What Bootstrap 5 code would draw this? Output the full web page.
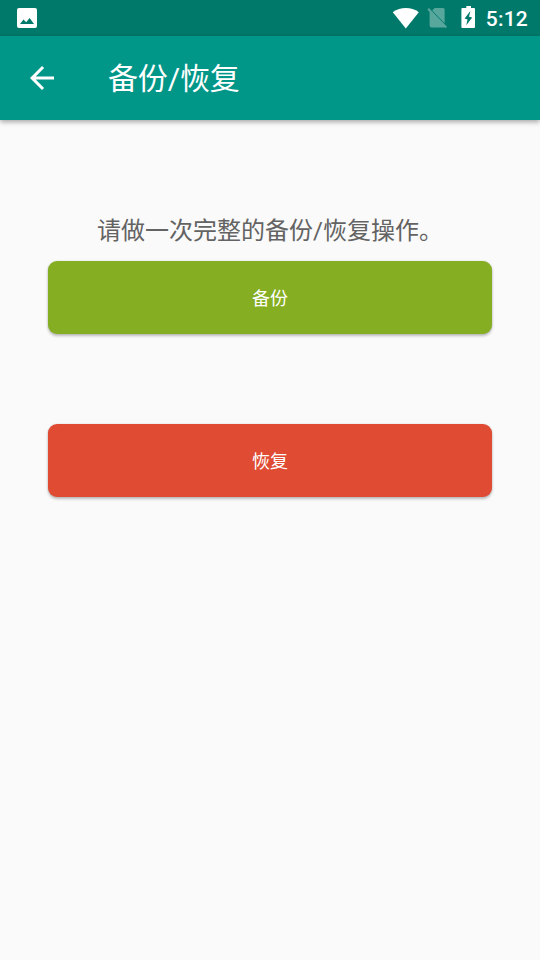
<!DOCTYPE html>
<html lang="zh-CN">
<head>
<meta charset="utf-8">
<meta name="viewport" content="width=device-width, initial-scale=1">
<title>备份/恢复</title>
<link href="https://cdn.jsdelivr.net/npm/bootstrap@5.3.0/dist/css/bootstrap.min.css" rel="stylesheet">
<style>
body { background: #fafafa; font-family: Roboto, "Noto Sans CJK SC", sans-serif; }
.status-bar { height: 36px; background: #00796b; padding: 0 12px 0 17px; }
.status-bar svg, .app-bar svg { display: block; flex: none; }
.clock { font-size: 21px; font-weight: 500; line-height: 36px; margin-left: 10px; letter-spacing: .2px; padding-top: 2px; }
.app-bar { height: 84px; background: #009688; padding: 0 24px; box-shadow: 0 2px 5px rgba(0,0,0,.34); }
.app-title { font-size: 30px; font-weight: 400; line-height: 44px; margin-left: 48px; padding-top: 2px; letter-spacing: -.15px; }
.screen { min-height: 840px; padding: 93px 48px 0; }
.hint { font-size: 24px; line-height: 36px; color: #636363; margin-bottom: 12px; }
.action { height: 73px; border: 0; border-radius: 9px; font-size: 18px; line-height: 27px; padding: 2px 0 0; box-shadow: 0 2px 3px rgba(0,0,0,.25), 0 0 2px rgba(0,0,0,.12); }
.action-backup, .action-backup:hover { background: #86ae22; }
.action-restore, .action-restore:hover { background: #e04b33; }
.action + .action { margin-top: 90px; }
</style>
</head>
<body>
<header>
  <div class="status-bar d-flex align-items-center text-white">
    <svg width="20" height="20" viewBox="0 0 20 20" aria-hidden="true"><path fill="#fff" fill-rule="evenodd" d="M2 0H18Q20 0 20 2V18Q20 20 18 20H2Q0 20 0 18V2Q0 0 2 0ZM3 16H17L12.6 10L9.2 14.3L6.5 11.5Z"/></svg>
    <svg class="ms-auto" width="27" height="22" viewBox="0.4 0 27 22" aria-hidden="true"><path fill="#fff" d="M.2 5.2Q6 1 13.2 1T26.2 5.2L13.2 21.5Z"/></svg>
    <svg width="34" height="24" viewBox="0.4 0 34 24" aria-hidden="true"><g fill="#fff" opacity=".34"><path d="M15 2H23.5Q25 2 25 3.6V17.2L12.6 4.4Z"/><path d="M7.8 3.6L9.3 2.1L27.4 20.8L25.9 22.3L24.8 21.2Q24.4 21.5 23.4 21.5H12Q10 21.5 10 19.5V5.9Z"/></g></svg>
    <svg width="22" height="24" viewBox="0 0 22 24" aria-hidden="true"><path fill="#fff" fill-rule="evenodd" d="M12.3 0V2H8.4Q7.4 2 7.4 3V21Q7.4 22 8.4 22H20Q21 22 21 21V3Q21 2 20 2H17V0ZM16.4 5L10.6 12.4L13.5 13.4L12.3 19.2L18.2 11.6L15 10.7Z"/></svg>
    <span class="clock">5:12</span>
  </div>
  <nav class="app-bar d-flex align-items-center text-white">
    <svg width="36" height="36" viewBox="0 0 24 24" role="img" aria-label="返回"><path fill="#fff" d="M20 11H7.83l5.59-5.59L12 4l-8 8 8 8 1.41-1.41L7.83 13H20z"/></svg>
    <h1 class="app-title mb-0">备份/恢复</h1>
  </nav>
</header>
<main class="screen">
  <p class="hint text-center text-nowrap">请做一次完整的备份/恢复操作。</p>
  <button type="button" class="action action-backup btn w-100 text-white">备份</button>
  <button type="button" class="action action-restore btn w-100 text-white">恢复</button>
</main>
<script src="https://cdn.jsdelivr.net/npm/bootstrap@5.3.0/dist/js/bootstrap.bundle.min.js"></script>
</body>
</html>
